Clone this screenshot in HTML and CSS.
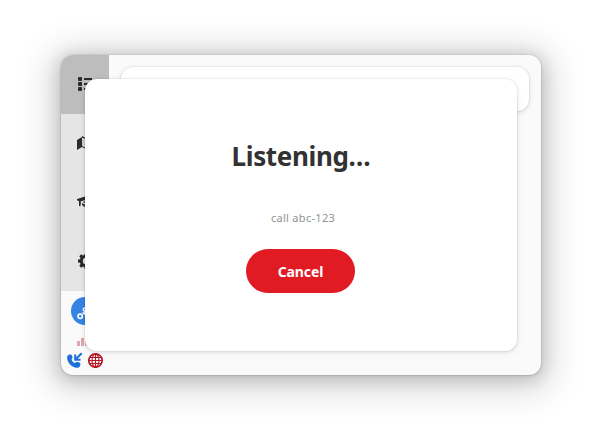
FILE: index.html
```html
<!DOCTYPE html>
<html lang="en">
<head>
<meta charset="utf-8">
<title>Voice call</title>
<link rel="stylesheet" href="styles.css">
</head>
<body>
<main class="window">
  <nav class="sidebar">
    <div class="tab active">
      <svg width="16" height="16" viewBox="0 0 16 16"><rect x="1" y="0" width="4" height="4" rx=".8"/><rect x="1" y="5" width="4" height="4" rx=".8"/><rect x="1" y="10" width="4" height="4" rx=".8"/><path d="M7 1h8v2H7zM7 6h8v2H7zM7 11h8v2H7z"/></svg>
    </div>
    <div class="tab">
      <svg width="16" height="16" viewBox="0 0 16 16"><path d="M0 4l5-3v10l-5 3z"/><path d="M5 1l6 3v10l-6-3z" fill="#cfcfcf"/><path d="M5 0l6 3v1L5 1.5zM5 11l6 3v-1l-6-3zM11 3l5-2v10l-5 3z"/></svg>
    </div>
    <div class="tab">
      <svg width="16" height="16" viewBox="0 0 16 16"><path d="M0 4L8 1.5 16 4v1.2L8 8 5.5 7l2.5-.8V5.2L3.8 6.2V9l-.6 2.6-1.2-.8V6.2L0 5.2z"/><path d="M5 8l3.2 1.7L13 7.8V11L8 12.3 5 10z"/></svg>
    </div>
    <div class="tab">
      <svg width="16" height="16" viewBox="0 0 16 16"><path transform="translate(1 -2)" fill-rule="evenodd" d="M6.6 1h2.8l.4 2 1.2.5 1.8-1.2 1.9 1.9-1.2 1.8.5 1.2 2 .4v2.8l-2 .4-.5 1.2 1.2 1.8-1.9 1.9-1.8-1.2-1.2.5-.4 2H6.6l-.4-2-1.2-.5-1.8 1.2-1.9-1.9L2.5 12 2 10.8l-2-.4V7.6l2-.4L2.5 6 1.3 4.2l1.9-1.9L5 3.5 6.2 3zM8 5.8a3.2 3.2 0 1 0 0 6.4 3.2 3.2 0 0 0 0-6.4z"/></svg>
    </div>
    <div class="status">
      <div class="avatar"><svg width="16" height="16" viewBox="0 0 16 16"><g fill="none" stroke="#fff" stroke-width="1.6"><circle cx="3.2" cy="11.3" r="2.2"/><circle cx="7.9" cy="4.6" r="1.6"/><path d="M5.6 7.3l2.5 2.2M7.2 7.5L12 12"/></g></svg></div>
      <div class="signal"><i class="bar low"></i><i class="bar mid"></i><i class="bar high"></i></div>
      <div class="indicators">
        <svg width="16" height="16" viewBox="0 0 16 16" fill="#1c71d8"><path d="M.5 3.8C1.2 2.8 3 2.4 4.2 2.7c.9.3 1.6 3 1 3.7L4.5 7.7c.6 1.5 1.7 2.6 3.2 3.3l1.6-.9c.7-.4 3.8.3 4 1.2.3 1-.2 3.3-1.2 3.9C6.2 18-1.6 9.5.5 3.8z"/><path d="M8.2 2.5v5.3h5.3M8.7 7.3L14.7 1.3" fill="none" stroke="#1c71d8" stroke-width="2"/></svg>
        <svg width="16" height="16" viewBox="0 0 16 16" fill="none" stroke="#b91624" stroke-width="1.1"><circle cx="7.5" cy="8.5" r="6.7" stroke-width="1.7"/><ellipse cx="7.5" cy="8.5" rx="3.5" ry="6.5"/><path d="M7.5 2v13M1 8.5h13M2 5.5h11M2 11.5h11"/></svg>
      </div>
    </div>
  </nav>
  <section class="content"><div class="card"></div></section>
  <div class="dialog" role="dialog">
    <h1>Listening…</h1>
    <p>call abc-123</p>
    <button>Cancel</button>
  </div>
</main>
</body>
</html>
```

FILE: styles.css
```css
* { box-sizing: border-box; }
body {
  margin: 0;
  padding: 55px 61px 67px;
  background: #fff;
  font-family: "Noto Sans", sans-serif;
}
.window {
  position: relative;
  display: flex;
  width: 480px;
  height: 320px;
  border-radius: 12px;
  background: #fafafa;
  box-shadow: 0 0 0 1px rgba(0,0,0,.05), 0 1px 3px rgba(0,0,0,.1), 0 3px 16px 3px rgba(0,0,0,.15), 0 5px 34px 12px rgba(0,0,0,.14);
}
.sidebar {
  display: flex;
  flex-direction: column;
  width: 48px;
}
.tab {
  display: flex;
  align-items: center;
  justify-content: center;
  height: 59px;
  background: #e5e5e5;
  fill: #2b2b2b;
}
.tab.active {
  background: #bdbdbd;
  border-top-left-radius: 12px;
}
.status {
  display: flex;
  flex-direction: column;
  padding-top: 6px;
}
.avatar {
  display: flex;
  align-items: center;
  justify-content: center;
  width: 28px;
  height: 28px;
  margin-left: 10px;
  border-radius: 50%;
  background: #3584e4;
}
.avatar svg { margin-top: 3px; }
.signal {
  display: flex;
  align-items: flex-end;
  gap: 1px;
  height: 9px;
  margin: 12px 0 0 16px;
}
.bar {
  width: 3px;
  background: #e0a4ac;
}
.low { height: 5px; }
.mid { height: 8px; }
.high { height: 5px; }
.indicators {
  display: flex;
  gap: 5px;
  margin: 6px 0 0 6px;
}
.indicators svg { flex: none; }
.content {
  flex: 1;
  padding: 12px;
}
.card {
  height: 44px;
  border-radius: 12px;
  background: #fff;
  box-shadow: 0 0 0 1px rgba(0,0,0,.03), 0 1px 3px 1px rgba(0,0,0,.07), 0 2px 6px 2px rgba(0,0,0,.03);
}
.dialog {
  position: absolute;
  inset: 24px;
  display: flex;
  flex-direction: column;
  align-items: center;
  border-radius: 12px;
  background: #fff;
  box-shadow: 0 0 0 1px rgba(0,0,0,.03), 0 1px 3px 1px rgba(0,0,0,.07), 0 2px 6px 2px rgba(0,0,0,.03);
}
h1 {
  margin: 59px 0 0;
  font-size: 26px;
  line-height: 36px;
  letter-spacing: -.35px;
  color: #323232;
}
p {
  margin: 35px 0 0 4px;
  font-size: 11px;
  line-height: 18px;
  letter-spacing: .3px;
  color: #929292;
}
button {
  width: 109px;
  height: 44px;
  margin: 22px 1px 0 0;
  border: 0;
  border-radius: 22px;
  background: #e01b24;
  color: #fff;
  font: bold 14px "Noto Sans", sans-serif;
  letter-spacing: -.1px;
}
```
